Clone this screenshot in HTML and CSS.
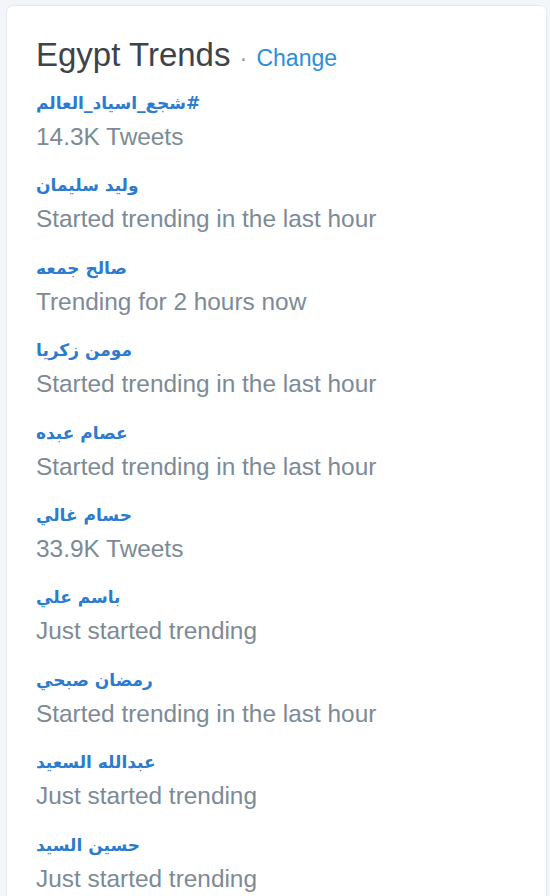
FILE: index.html
```html
<!DOCTYPE html>
<html lang="en">
<head>
<meta charset="utf-8">
<title>Egypt Trends</title>
<link rel="stylesheet" href="styles.css">
</head>
<body>
<div class="card">
  <h2 class="title">Egypt Trends <span class="sep">·</span> <a class="change" href="#">Change</a></h2>
  <ul class="trends">
    <li class="trend"><a class="name" href="#" dir="rtl">#شجع_اسياد_العالم</a><div class="meta">14.3K Tweets</div></li>
    <li class="trend"><a class="name" href="#" dir="rtl">وليد سليمان</a><div class="meta">Started trending in the last hour</div></li>
    <li class="trend"><a class="name" href="#" dir="rtl">صالح جمعه</a><div class="meta">Trending for 2 hours now</div></li>
    <li class="trend"><a class="name" href="#" dir="rtl">مومن زكريا</a><div class="meta">Started trending in the last hour</div></li>
    <li class="trend"><a class="name" href="#" dir="rtl">عصام عبده</a><div class="meta">Started trending in the last hour</div></li>
    <li class="trend"><a class="name" href="#" dir="rtl">حسام غالي</a><div class="meta">33.9K Tweets</div></li>
    <li class="trend"><a class="name" href="#" dir="rtl">باسم علي</a><div class="meta">Just started trending</div></li>
    <li class="trend"><a class="name" href="#" dir="rtl">رمضان صبحي</a><div class="meta">Started trending in the last hour</div></li>
    <li class="trend"><a class="name" href="#" dir="rtl">عبدالله السعيد</a><div class="meta">Just started trending</div></li>
    <li class="trend"><a class="name" href="#" dir="rtl">حسين السيد</a><div class="meta">Just started trending</div></li>
  </ul>
</div>
</body>
</html>
```

FILE: styles.css
```css
html, body {
  margin: 0;
  padding: 0;
  background: #f3f6f8;
  font-family: "Liberation Sans", Arial, sans-serif;
  overflow: hidden;
}

.card {
  margin: 5px 3px 0 6px;
  background: #ffffff;
  border: 1px solid #e3e9ee;
  border-radius: 7px;
  padding: 29px 20px 40px 29px;
  min-height: 1000px;
}

.title {
  margin: 0 0 6px 0;
  font-size: 33px;
  line-height: 40px;
  font-weight: normal;
  color: #3d4349;
}

.sep {
  font-size: 23px;
  color: #8899a6;
}

.change {
  font-size: 23px;
  color: #2a8fd8;
  text-decoration: none;
}

.trends {
  list-style: none;
  margin: 0;
  padding: 0;
}

.trend {
  display: flex;
  flex-direction: column;
  align-items: flex-start;
  padding-bottom: 15.4px;
}

.name {
  font-family: "DejaVu Sans", sans-serif;
  font-weight: bold;
  font-size: 17px;
  line-height: 39px;
  color: #2b7bd0;
  text-decoration: none;
}

.meta {
  font-size: 24.4px;
  line-height: 28px;
  color: #7c8a96;
}
```
